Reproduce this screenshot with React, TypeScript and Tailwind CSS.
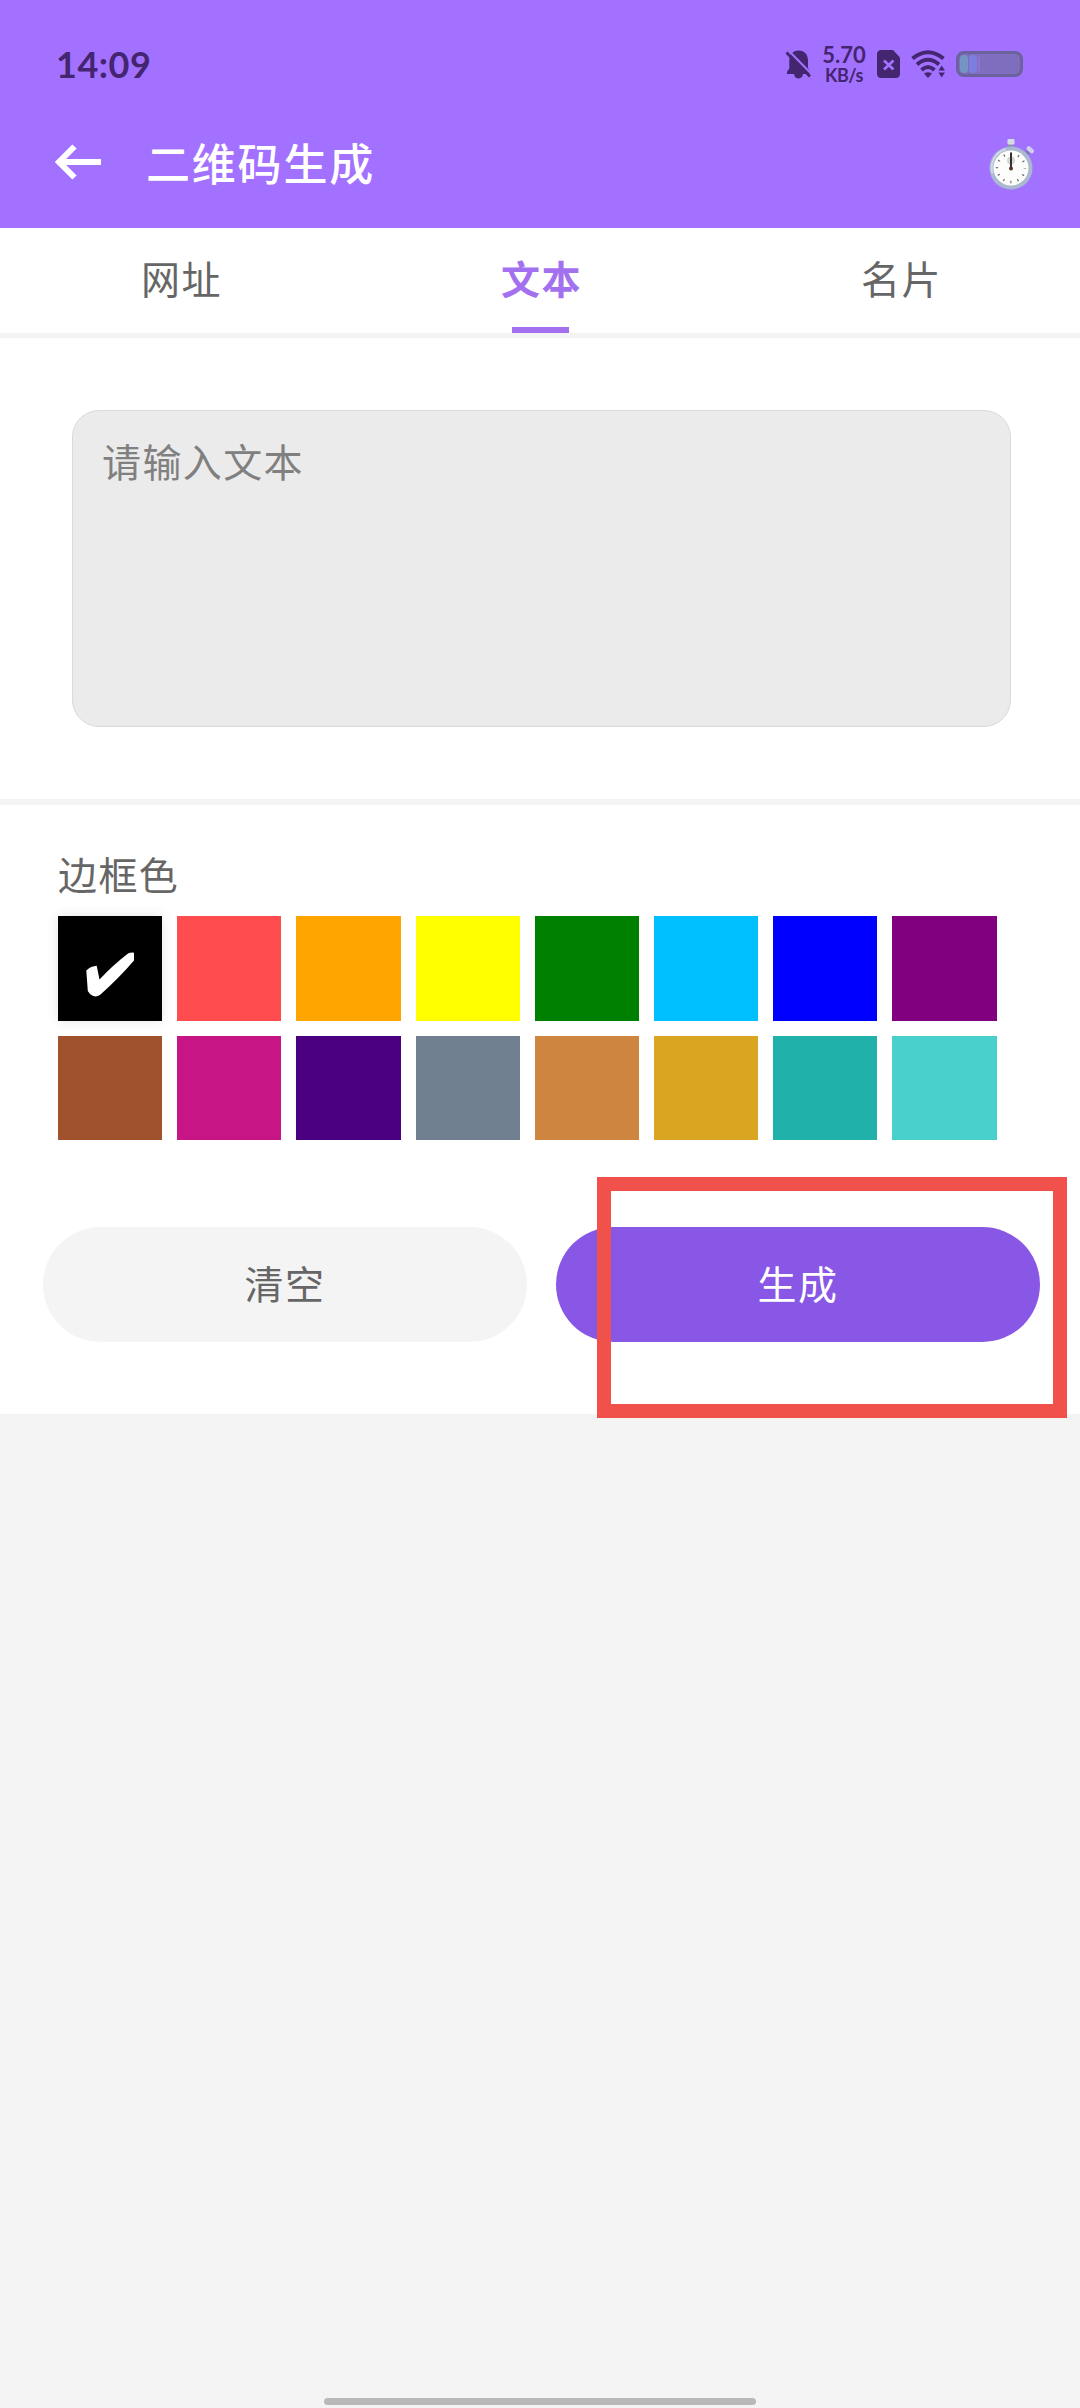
const cjk = "font-['Noto_Sans_CJK_SC',sans-serif]";

const swatches = [
  '#000000', '#ff4d4f', '#ffa500', '#ffff00', '#008000', '#00bfff', '#0000ff', '#800080',
  '#a0522d', '#c71585', '#4b0082', '#708090', '#cd853f', '#daa520', '#20b2aa', '#48d1cc',
];

function BellOff() {
  return (
    <svg width="27" height="32" viewBox="0 0 27 32" fill="#44256f">
      <path d="M13.500 2.500c6 0 9.500 4.300 9.500 10v7.500l2.500 4.500V26H2v-2.200l2.300-3.300v-8c0-5.500 3.400-10 9.200-10z" />
      <path d="M9 26h9c-.4 2.800-2 4.500-4.500 4.500S9.400 28.800 9 26z" />
      <path d="M3 2L27 26.500" stroke="#a371ff" strokeWidth="2.200" />
      <path d="M1.500 4.500L25 28.500" stroke="#44256f" strokeWidth="2.800" />
    </svg>
  );
}

function SimOff() {
  return (
    <svg width="24" height="28" viewBox="0 0 24 28">
      <path d="M4.500 0H16L23 7.500V23.500Q23 28 18.500 28H4.500Q0 28 0 23.500V4.500Q0 0 4.500 0z" fill="#44256f" />
      <path d="M7 10.500l9.500 9M16.500 10.500l-9.500 9" stroke="#a371ff" strokeWidth="2.800" />
    </svg>
  );
}

function Wifi() {
  return (
    <svg width="35" height="28" viewBox="0 0 35 28" fill="none" stroke="#44256f" strokeWidth="4">
      <path d="M1.500 8.500Q17 -4 32.500 8.500" />
      <path d="M6 14.500Q17 5 28 14.500" />
      <path d="M10.500 20Q17 14 23.500 20" />
      <path d="M13 23.500Q17 21 21 23.500L17 28z" fill="#44256f" stroke="none" />
      <path d="M27.500 20.500l3.200-5 3.200 5zM27.500 22.500l3.200 5 3.200-5z" fill="#44256f" stroke="#a371ff" strokeWidth="1" paintOrder="stroke" />
    </svg>
  );
}

function Stopwatch() {
  return (
    <svg width="46" height="54" viewBox="0 0 46 54">
      <rect x="19.500" y="7" width="5" height="4" fill="#8a93a8" />
      <rect x="18.500" y="2" width="7" height="5.500" rx="1" fill="#d5dbe6" />
      <path d="M36.500 18l2.800-3.500" stroke="#7f76b6" strokeWidth="4.500" />
      <path d="M39.800 11.500l3 2.600" stroke="#d0cfec" strokeWidth="4.500" strokeLinecap="round" />
      <circle cx="22" cy="31" r="21.500" fill="#abb8d1" />
      <path d="M3.500 36.500A19.500 19.500 0 0 1 17 12" fill="none" stroke="#cfd8e6" strokeWidth="2" />
      <circle cx="22" cy="31" r="17.500" fill="#fdfdfb" />
      <circle cx="22" cy="23.500" r="4" fill="#d6d6d6" />
      <circle cx="22" cy="31" r="14" fill="none" stroke="#6b6b6b" strokeWidth="2.400" strokeDasharray="1.200 6.130" strokeDashoffset="0.600" />
      <path d="M22 15.500v17" stroke="#37302e" strokeWidth="2" />
      <circle cx="22" cy="31.500" r="2" fill="#5b2f2a" />
    </svg>
  );
}

function StatusBar() {
  return (
    <div className="flex h-[128px] items-center justify-between pl-[56px] pr-[57px] text-[#44256f]">
      <span className="font-['Lato',sans-serif] text-[36px] font-bold leading-none tracking-[0.500px]">14:09</span>
      <div className="flex items-center">
        <BellOff />
        <div className="ml-[10px] flex w-[44px] flex-col items-center font-['Lato',sans-serif] font-bold">
          <span className="text-[22px] leading-[22px]">5.70</span>
          <span className="text-[18px] leading-[18px] tracking-[-0.500px]">KB/s</span>
        </div>
        <div className="ml-[11px]"><SimOff /></div>
        <div className="ml-[10px]"><Wifi /></div>
        <div className="ml-[10px] flex h-[26px] w-[67px] items-center rounded-[8px] border-[3px] border-[#6c639e] bg-[#7f6dbd] pl-px">
          <span className="h-[18px] w-[8px] rounded-[4px] bg-[#7594c2]" />
          <span className="ml-px h-[18px] w-[8px] rounded-[4px] bg-[#7d7fe0]" />
          <span className="ml-px h-[16px] w-[2px] bg-[#9170d0]" />
        </div>
      </div>
    </div>
  );
}

function TitleBar() {
  return (
    <div className="flex h-[100px] items-start pl-[55px] pr-[45px]">
      <svg className="mt-[16px]" width="47" height="36" viewBox="0 0 47 36" fill="none" stroke="#fff" strokeWidth="6">
        <path d="M46 18H5M19.500 2.500L4 18l15.500 15.500" />
      </svg>
      <h1 className="ml-[44px] mt-[2px] flex-1 text-[44px] font-medium leading-[64px] tracking-[1.800px] text-white">二维码生成</h1>
      <div className="mt-[9px]"><Stopwatch /></div>
    </div>
  );
}

function Tab({ label, active }: { label: string; active?: boolean }) {
  return (
    <button className={active ? 'flex flex-1 flex-col items-center text-[#a371f0]' : 'flex flex-1 flex-col items-center text-[#666]'}>
      <span className={active ? 'mt-[20px] pl-[3px] text-[39px] font-bold leading-[58px] tracking-[1.400px]' : 'mt-[20px] pl-[3px] text-[39px] leading-[58px] tracking-[1.400px]'}>{label}</span>
      {active && <span className="mt-[21px] h-[6px] w-[57px] bg-[#a371f0]" />}
    </button>
  );
}

export default function App() {
  return (
    <div className={`flex h-[2408px] w-[1080px] flex-col bg-[#f4f4f4] ${cjk}`}>
      <header className="h-[228px] bg-[#a371ff]">
        <StatusBar />
        <TitleBar />
      </header>
      <nav className="flex h-[105px] bg-white">
        <Tab label="网址" />
        <Tab label="文本" active />
        <Tab label="名片" />
      </nav>
      <section className="mt-[5px] h-[461px] bg-white pl-[72px] pt-[72px]">
        <textarea
          placeholder="请输入文本"
          className="block h-[317px] w-[939px] resize-none rounded-[27px] border border-[#dadada] bg-[#ebebeb] px-[29px] pt-[20px] text-[39px] leading-[58px] tracking-[1.400px] placeholder:text-[#808080]"
        />
      </section>
      <section className="mt-[6px] h-[609px] bg-white">
        <h2 className="pl-[58px] pt-[39px] text-[39px] leading-[58px] tracking-[1.400px] text-[#666]">边框色</h2>
        <div className="ml-[58px] mt-[14px] grid w-[938.500px] grid-cols-8 gap-[15px]">
          {swatches.map((color, i) => (
            <button
              key={color}
              className={i === 0 ? 'flex h-[104.500px] shadow-[0_0_12px_rgba(0,0,0,0.1)]' : 'h-[104.500px]'}
              style={{ backgroundColor: color }}
            >
              {i === 0 && (
                <svg className="ml-[28px] mt-[36px]" width="49" height="46" viewBox="0 0 49 46" fill="#fff">
                  <path d="M.3 18.500Q5 14 10.700 13.700L13.500 27.500Q27 13 42 1.500Q45 .2 48 .8L48 8.500Q33 26 14.500 42.500Q9 46.500 4 42L1.800 39z" />
                </svg>
              )}
            </button>
          ))}
        </div>
        <div className="mt-[87px] flex gap-[29px] pl-[43px] pr-[40px]">
          <button className="h-[115px] flex-1 rounded-full bg-[#f4f4f4] pb-[5px] text-[39px] leading-[58px] tracking-[1.400px] text-[#666]">清空</button>
          <div className="relative flex-1">
            <button className="h-[115px] w-full rounded-full bg-[#8957e5] pb-[5px] text-[39px] leading-[58px] tracking-[1.400px] text-white">生成</button>
            <div className="pointer-events-none absolute -right-[27px] -top-[50px] h-[241px] w-[470px] border-[14px] border-[#f0524b]" />
          </div>
        </div>
      </section>
      <div className="mx-auto mb-[3px] mt-auto h-[7px] w-[432px] rounded-full bg-[#b9b9b9]" />
    </div>
  );
}
